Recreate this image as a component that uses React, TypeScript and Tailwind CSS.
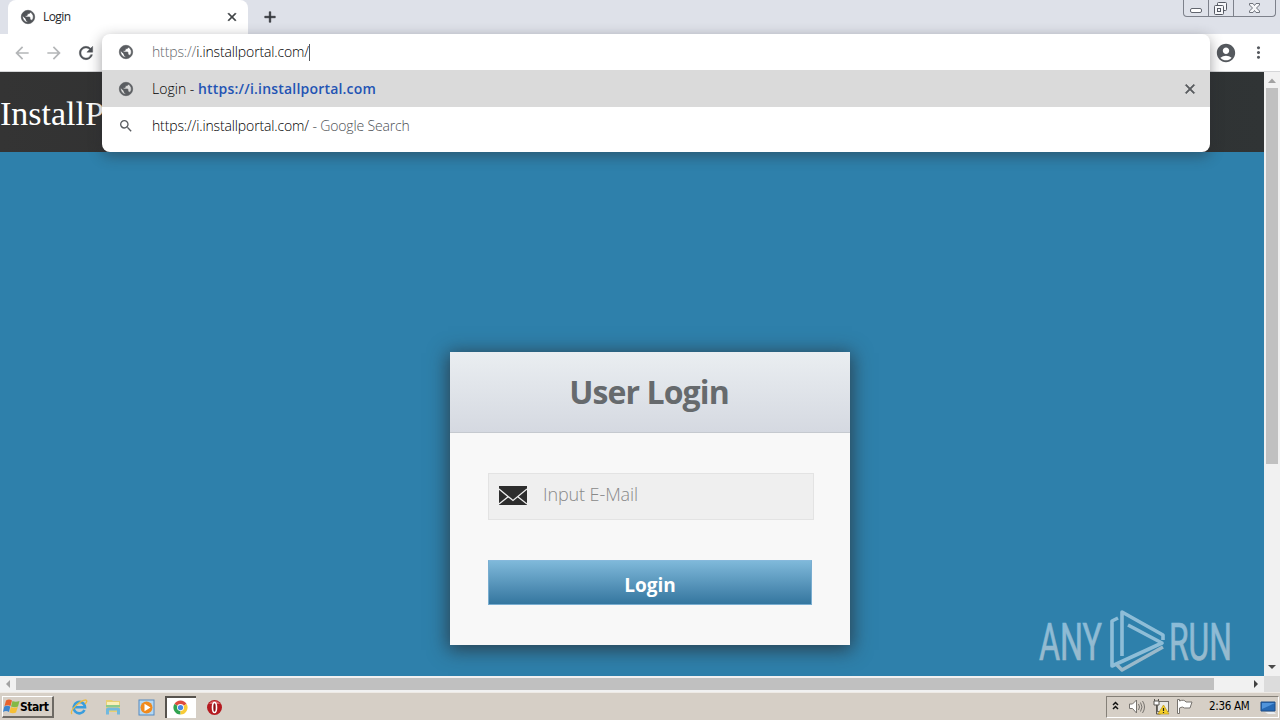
import React from "react";
import {
  MdAccountCircle,
  MdAdd,
  MdArrowBack,
  MdArrowForward,
  MdClose,
  MdMoreVert,
  MdPublic,
  MdRefresh,
  MdSearch,
} from "react-icons/md";

const WindowButtons: React.FC = () => (
  <div className="flex h-[17px] w-[93px] rounded-b-[4px] border border-t-0 border-[#7d818b] bg-[#dfe2ea]">
    <div className="w-[25px] border-r border-[#7d818b]">
      <svg width="24" height="16" fill="#fff" stroke="#62666f">
        <rect x="6.5" y="8.5" width="11" height="4" rx="1.5" />
      </svg>
    </div>
    <div className="w-[25px] border-r border-[#7d818b]">
      <svg width="24" height="16" fill="#f6f7fa" stroke="#555963">
        <rect x="8.5" y="2.5" width="9" height="8" rx="1" />
        <rect x="5.5" y="5.5" width="9" height="9" rx="1" />
        <rect x="8.5" y="8.5" width="3" height="3" />
      </svg>
    </div>
    <div className="flex-1">
      <svg width="41" height="16" fill="#f6f7fa" stroke="#62666f" strokeWidth="0.9">
        <path d="M15.5 3.5h3.5l1.5 2 1.5-2h3.5v1.5L22.5 8l3 3v1.5H22l-1.5-2-1.5 2h-3.5V11l3-3-3-3z" />
      </svg>
    </div>
  </div>
);

const TabStrip: React.FC = () => (
  <div className="flex h-[34px] items-start bg-[#dee1e9] pl-2">
    <div className="flex h-[34px] w-[240px] items-center rounded-t-[8px] bg-white pr-[9px] pl-[12px]">
      <MdPublic className="size-4 stroke-current stroke-1 text-[#505357] [&>path:first-child]:stroke-none" />
      <span className="ml-[7px] flex-1 text-[12px] tracking-[-0.6px] text-[#26282b]">Login</span>
      <MdClose className="size-[14px] stroke-current stroke-1 text-[#3c4043] [&>path:first-child]:stroke-none" />
    </div>
    <MdAdd className="mt-[8px] ml-[13px] size-[18px] stroke-current stroke-[0.8] text-[#303338] [&>path:first-child]:stroke-none" />
    <div className="flex-1" />
    <div className="mr-[4px]">
      <WindowButtons />
    </div>
  </div>
);

const Omnibox: React.FC = () => (
  <div className="absolute top-[34px] left-[102px] z-20 h-[118px] w-[1108px] rounded-[8px] bg-white text-[14px] shadow-[0_4px_14px_rgba(40,40,45,0.45)]">
    <div className="flex h-[36px] items-center pl-4">
      <MdPublic className="size-4 stroke-current stroke-1 text-[#5a5d61] [&>path:first-child]:stroke-none" />
      <div className="mt-[-2px] ml-[18px] flex items-center font-light whitespace-pre text-black">
        <span className="tracking-[-0.14px] text-[#65696d]">https://</span>
        <span className="tracking-[-0.14px]">i.installportal.com/</span>
        <span className="mt-[2px] h-[17px] w-px bg-[#55585c]" />
      </div>
    </div>
    <div className="flex h-[37px] items-center bg-[#dadada] pr-[12px] pl-4">
      <MdPublic className="size-4 stroke-current stroke-1 text-[#5a5d61] [&>path:first-child]:stroke-none" />
      <div className="ml-[18px] flex-1 font-light whitespace-pre text-black">
        <span className="tracking-[0.02px]">Login - </span>
        <span className="font-semibold tracking-[0.2px] text-[#2354b4]">https://i.installportal.com</span>
      </div>
      <MdClose className="size-4 stroke-current stroke-1 text-[#5a5d61] [&>path:first-child]:stroke-none" />
    </div>
    <div className="flex h-[37px] items-center pl-4">
      <MdSearch className="size-4 text-[#5a5d61]" />
      <div className="ml-[18px] font-light whitespace-pre text-black">
        <span className="tracking-[-0.14px]">https://i.installportal.com/</span>
        <span className="tracking-[-0.15px] text-[#4c5054]"> - Google Search</span>
      </div>
    </div>
  </div>
);

const Toolbar: React.FC = () => (
  <div className="flex h-[38px] items-center border-b border-[#d5d6d8] bg-white pr-[12px] pl-[12px]">
    <MdArrowBack className="size-5 text-[#b4b6b8]" />
    <MdArrowForward className="ml-[12px] size-5 text-[#b4b6b8]" />
    <MdRefresh className="ml-[12px] size-5 stroke-current stroke-[0.5] text-[#4d5156] [&>path:first-child]:stroke-none" />
    <div className="flex-1" />
    <MdAccountCircle className="size-[22px] text-[#55595e]" />
    <MdMoreVert className="ml-[12px] size-[19px] text-[#55595e]" />
  </div>
);

const LoginCard: React.FC = () => (
  <div className="h-[293px] w-[400px] bg-[#f8f8f8] shadow-[0_3px_18px_2px_rgba(40,40,45,0.72)]">
    <div className="flex h-[81px] items-center justify-center border-b border-[#c5c9cf] bg-linear-to-b from-[#eaeef1] to-[#d5d9e1]">
      <h1 className="mr-[2px] text-[32px] leading-[40px] font-bold tracking-[-0.9px] text-[#666a6d]">User Login</h1>
    </div>
    <div className="px-[38px] pt-[40px]">
      <div className="flex h-[47px] w-[326px] items-center border border-[#e3e3e3] bg-[#efefef] pl-[10px]">
        <svg width="29" height="20" viewBox="0 0 29 20" className="mt-[-4px] ml-[-1px]">
          <rect x="1" y="1" width="28" height="19" fill="#2d2d2d" />
          <path d="M1 4 15 15.5 29 4M1 19 10.5 11.5M29 19 19.5 11.5" fill="none" stroke="#efefef" strokeWidth="1.3" />
        </svg>
        <span className="mt-[-4px] ml-[16px] text-[18px] font-light tracking-[-0.1px] text-[#898989]">Input E-Mail</span>
      </div>
      <div className="mt-[40px] flex h-[45px] w-[324px] items-center justify-center border border-[#79add0] border-t-[#86b9dc] bg-linear-to-b from-[#7fb9da] to-[#34769f] pt-[6px] text-[19px] font-bold text-white">
        Login
      </div>
    </div>
  </div>
);

const Watermark: React.FC = () => (
  <svg className="absolute top-[532px] left-[1030px] overflow-visible" width="220" height="72" viewBox="0 0 220 72">
    <defs>
      <linearGradient id="mark" x1="0" y1="0" x2="0" y2="1">
        <stop offset="0" stopColor="#87bcdb" />
        <stop offset="1" stopColor="#9db9c8" />
      </linearGradient>
    </defs>
    <g fill="url(#mark)" stroke="url(#mark)" strokeWidth="0.7" fontFamily="Roboto, sans-serif" fontSize="51">
      <text x="9" y="55.5" textLength="63" lengthAdjust="spacingAndGlyphs">ANY</text>
      <text x="139" y="55.5" textLength="63" lengthAdjust="spacingAndGlyphs">RUN</text>
    </g>
    <g fill="none" stroke="#8ebdd7" strokeWidth="3.6" strokeLinejoin="round">
      <path d="M88 14 82 17v45L132 39 98 21" />
      <path d="M92 52V8l41 23v5" />
      <path d="M87 61 92 66 133 43" stroke="#9ab9ca" />
    </g>
  </svg>
);

const VerticalScroll: React.FC = () => (
  <div className="flex w-4 flex-col items-center bg-[#f1f1f1]">
    <svg width="16" height="16">
      <path d="M4 11 8 6.5 12 11z" fill="#a2a2a2" />
    </svg>
    <div className="h-[376px] w-[12px] bg-[#c0c0c0]" />
    <div className="flex-1" />
    <svg width="16" height="18">
      <path d="M4 7h8L8 11z" fill="#4b4b4b" />
    </svg>
  </div>
);

const HorizontalScroll: React.FC = () => (
  <div className="flex h-4 items-center bg-[#f1f1f1]">
    <svg width="16" height="16">
      <path d="M10 4v8L6 8z" fill="#a2a2a2" />
    </svg>
    <div className="h-[12px] w-[1198px] bg-[#c0c0c0]" />
    <div className="flex-1" />
    <svg width="16" height="16">
      <path d="M6 4v8l4-4z" fill="#404040" />
    </svg>
    <div className="h-4 w-4 bg-[#dcdcdc]" />
  </div>
);

const WindowsFlag: React.FC = () => (
  <svg width="17" height="17" viewBox="0 0 17 17">
    <path d="M3 2.5q3-2 6 0L7.5 8Q5 6.5 1.500 8z" fill="#e8622c" />
    <path d="M9.500 3q3 1.500 7 0L15 8.5q-3 1.500-7 0z" fill="#83b945" />
    <path d="M1.300 8.500q3-1.500 6 0L6 14q-3-2-6 0z" fill="#3c84cd" />
    <path d="M7.800 9q3 1.500 7 0L13 14.500q-3 1.500-6.500 0z" fill="#f6bf35" />
  </svg>
);

const ExplorerIcon: React.FC = () => (
  <svg width="18" height="18" viewBox="0 0 18 18">
    <path d="M14.5 12A5.700 5.700 0 1 1 15 9.200H5" fill="none" stroke="#399ddd" strokeWidth="2.6" />
    <path d="M2 16C-1 13 10 2 16 2q2 1-1 4" fill="none" stroke="#ecbb40" strokeWidth="1.3" />
  </svg>
);

const FolderIcon: React.FC = () => (
  <svg width="18" height="18" viewBox="0 0 18 18">
    <path d="M2 2h6l1 1h7v11H2z" fill="#e8cf73" />
    <path d="M3 4h12v3H3z" fill="#f9efb8" />
    <path d="M2 7h14v2H2z" fill="#8ecb8a" />
    <path d="M2 16.5v-5q0-2 2-2h10q2 0 2 2v5h-3v-4H5v4z" fill="#71b9df" />
  </svg>
);

const PlayerIcon: React.FC = () => (
  <svg width="17" height="17" viewBox="0 0 17 17">
    <rect x="1" y="1" width="15" height="15" fill="#b4d8f3" stroke="#558ac0" />
    <circle cx="8.5" cy="8.5" r="6" fill="#f08a1d" />
    <path d="M6.5 4.800v7.400l6-3.700z" fill="#fff" />
  </svg>
);

const ChromeIcon: React.FC = () => (
  <svg width="15" height="15" viewBox="0 0 16 16">
    <path d="M8 8 1.500 4.200A7.500 7.500 0 0 1 14.5 4.200z" fill="#dd4b3e" />
    <path d="M8 8V15.5A7.500 7.500 0 0 1 1.500 4.200z" fill="#31a350" />
    <path d="M8 8 14.5 4.200A7.500 7.500 0 0 1 8 15.5z" fill="#f8cb37" />
    <circle cx="8" cy="8" r="3.7" fill="#fff" />
    <circle cx="8" cy="8" r="2.8" fill="#4788e4" />
  </svg>
);

const OperaIcon: React.FC = () => (
  <svg width="17" height="17" viewBox="0 0 17 17">
    <circle cx="8.5" cy="8.5" r="7.5" fill="#b51a20" />
    <path d="M3 5a6.500 6.500 0 0 1 11 0z" fill="#dc6569" />
    <ellipse cx="8.5" cy="8.5" rx="2" ry="5" fill="#8d1015" stroke="#fff" strokeWidth="1.6" />
  </svg>
);

const Tray: React.FC = () => (
  <div className="flex h-[22px] w-[173px] items-center border border-t-[#858078] border-r-white border-b-white border-l-[#858078] text-black">
    <svg width="16" height="18" fill="none" stroke="#111" strokeWidth="1.5">
      <path d="m6 7 2.500-2.500L11 7M6 11l2.500-2.500L11 11" />
    </svg>
    <svg width="18" height="18" className="ml-[5px]" fill="#fff" stroke="#77736e">
      <path d="M1.500 6h3l4-4v13l-4-4.500h-3z" />
      <path d="M10.500 6q2 3 0 6M12.500 4.500q3 4.500 0 9M14.500 3q4 6 0 12" fill="none" />
    </svg>
    <svg width="18" height="18" className="ml-[6px]">
      <rect x="5.5" y="3.5" width="11" height="10" fill="#e9e9e4" stroke="#716e68" />
      <path d="M2.500 1v5h4V1M4.500 7v9h4" fill="none" stroke="#595650" />
      <path d="M2 3h5v4H2z" fill="#fff" stroke="#595650" />
      <path d="m11.500 7 5.500 9H6z" fill="#f4cf28" stroke="#bd9614" strokeWidth="0.7" />
      <path d="M11.500 10v3M11.500 14v1" stroke="#222" strokeWidth="1.2" />
    </svg>
    <svg width="18" height="18" className="ml-[6px]" fill="#fff" stroke="#77736e">
      <path d="M1.500 1.500v14h2V10q3-2 5 0H14l2-6h-6q-2-3-6.500-1V1.500z" />
    </svg>
    <span className="ml-[15px] w-[43px] font-['DejaVu_Sans_Condensed','DejaVu_Sans',sans-serif] text-[11.5px] tracking-[-0.3px] whitespace-nowrap">
      2:36 AM
    </span>
    <svg width="17" height="17" className="ml-[8px]">
      <path d="M1 3h14v9H1z" fill="#2669b4" stroke="#1e4e88" />
      <path d="M2 4h13L2 10z" fill="#5094db" />
      <path d="M5 13h9l2 2H8z" fill="#e9edf1" />
    </svg>
  </div>
);

const Taskbar: React.FC = () => (
  <div className="flex h-7 items-center border-t border-[#eeeae5] bg-[#d6cfc6] pt-px pr-px pl-[2px]">
    <div className="flex h-[22px] w-[52px] items-center border-t border-r-2 border-b-2 border-l border-t-white border-r-[#6e6a64] border-b-[#6e6a64] border-l-white">
      <WindowsFlag />
      <span className="font-['DejaVu_Sans_Condensed','DejaVu_Sans',sans-serif] text-[12px] font-bold tracking-[-0.45px] text-black">Start</span>
    </div>
    <div className="ml-[16px]"><ExplorerIcon /></div>
    <div className="ml-[16px]"><FolderIcon /></div>
    <div className="ml-[16px]"><PlayerIcon /></div>
    <div className="ml-[10px] flex h-[22px] w-[31px] items-center justify-center border-t-2 border-l-2 border-t-[#57534e] border-l-[#57534e] bg-white pr-[3px] pb-[2px]">
      <ChromeIcon />
    </div>
    <div className="ml-[10px]"><OperaIcon /></div>
    <div className="flex-1" />
    <Tray />
  </div>
);

const App: React.FC = () => {
  return (
    <div className="relative h-[720px] w-[1280px] overflow-hidden bg-white font-['Open_Sans','Noto_Sans',sans-serif]">
      <TabStrip />
      <Toolbar />
      <Omnibox />
      <div className="flex h-[604px]">
        <main className="w-[1264px] overflow-hidden bg-[#2e80ab]">
          <header className="flex h-[80px] items-center bg-linear-to-r from-[#343434] via-[#292b2c] to-[#303435]">
            <span className="mt-[3px] font-['Liberation_Serif',serif] text-[34px] text-white">InstallP</span>
          </header>
          <div className="pt-[200px] pl-[450px]">
            <LoginCard />
          </div>
        </main>
        <VerticalScroll />
      </div>
      <HorizontalScroll />
      <Taskbar />
      <div className="absolute top-[72px] left-0">
        <Watermark />
      </div>
    </div>
  );
};

export default App;
